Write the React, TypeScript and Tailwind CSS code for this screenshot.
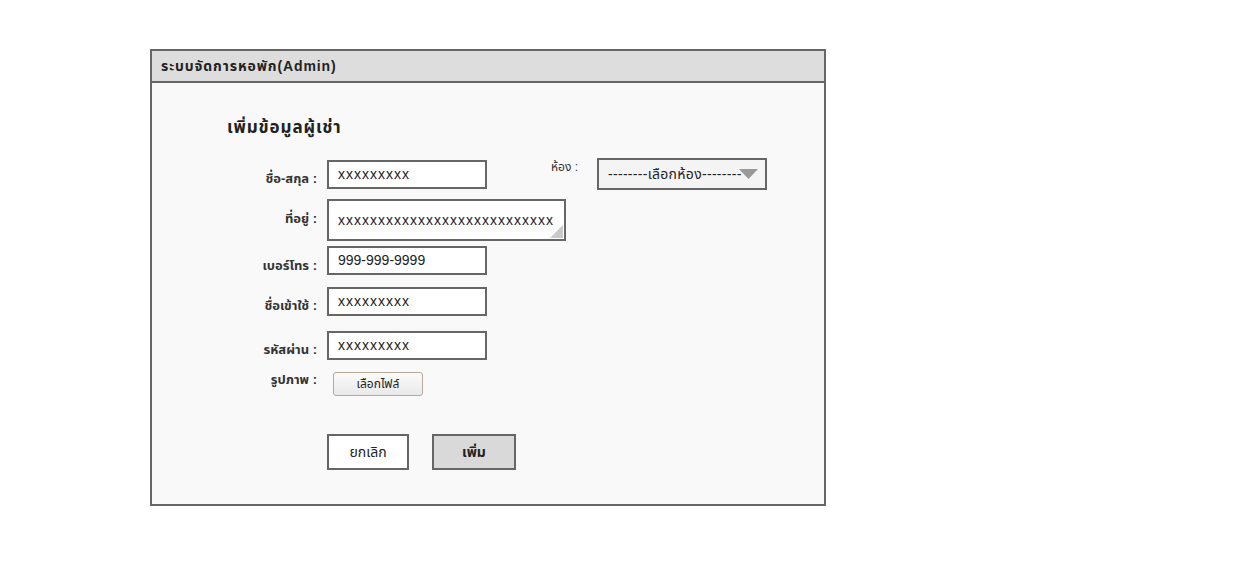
const font = { fontFamily: '"Liberation Sans", "Noto Sans Thai", "Noto Sans", sans-serif' }

function Field({ children, className = '' }: { children: React.ReactNode; className?: string }) {
  return (
    <div
      className={`relative flex items-center border-2 border-[#666] bg-white pl-[9px] text-[14px] text-[#222] ${className}`}
    >
      {children}
    </div>
  )
}

function Label({ text, className = '' }: { text: string; className?: string }) {
  return (
    <div className={`w-[165px] shrink-0 text-right text-[13px] font-bold leading-[16px] text-[#333] ${className}`}>
      {text}
    </div>
  )
}

export default function App() {
  return (
    <div className="min-h-[563px] w-[1251px] bg-white pl-[150px] pt-[49px]" style={font}>
      <div className="h-[457px] w-[676px] border-2 border-[#666] bg-[#f9f9f9]">
        {/* header */}
        <div className="flex h-[32px] items-center border-b-2 border-[#666] bg-[#dddddd] pl-[9px] text-[14px] font-bold tracking-[0.9px] text-[#222]">
          ระบบจัดการหอพัก(Admin)
        </div>

        <div className="pt-[33px]">
          <div className="ml-[75px] text-[17px] font-bold leading-[24px] tracking-[0.9px] text-[#222]">
            เพิ่มข้อมูลผู้เช่า
          </div>

          {/* name + room */}
          <div className="mt-[18px] flex items-start">
            <Label text="ชื่อ-สกุล :" className="mt-[13px]" />
            <Field className="ml-[10px] mt-[2px] h-[29px] w-[160px] tracking-[1px]">xxxxxxxxx</Field>
            <div className="ml-[64px] mt-[1px] w-[46px] text-[12px] leading-[16px] text-[#333]">ห้อง :</div>
            <div className="relative flex h-[32px] w-[170px] items-center overflow-hidden border-2 border-[#666] bg-[#f4f4f4] pl-[9px] text-[14px] text-[#222]">
              <span className="whitespace-nowrap tracking-[0.3px]">--------เลือกห้อง--------</span>
              <svg className="absolute right-[7px] top-[9px]" width="19" height="10" viewBox="0 0 19 10">
                <polygon points="0,0 19,0 9.5,10" fill="#999" />
              </svg>
            </div>
          </div>

          {/* address */}
          <div className="mt-[9px] flex items-center">
            <Label text="ที่อยู่ :" className="mt-[-2px]" />
            <Field className="ml-[10px] h-[42px] w-[239px] overflow-hidden tracking-[1px]">
              <span className="whitespace-nowrap">xxxxxxxxxxxxxxxxxxxxxxxxxxx</span>
              <svg className="absolute bottom-[1px] right-[1px]" width="13" height="13" viewBox="0 0 13 13">
                <polygon points="13,0 13,13 0,13" fill="#c8c8c8" />
              </svg>
            </Field>
          </div>

          {/* phone */}
          <div className="mt-[5px] flex items-start">
            <Label text="เบอร์โทร :" className="mt-[12px]" />
            <Field className="ml-[10px] h-[29px] w-[160px]">999-999-9999</Field>
          </div>

          {/* username */}
          <div className="mt-[12px] flex items-start">
            <Label text="ชื่อเข้าใช้ :" className="mt-[11px]" />
            <Field className="ml-[10px] h-[29px] w-[160px] tracking-[1px]">xxxxxxxxx</Field>
          </div>

          {/* password */}
          <div className="mt-[15px] flex items-start">
            <Label text="รหัสผ่าน :" className="mt-[11px]" />
            <Field className="ml-[10px] h-[29px] w-[160px] tracking-[1px]">xxxxxxxxx</Field>
          </div>

          {/* picture */}
          <div className="mt-[12px] flex items-start">
            <Label text="รูปภาพ :" />
            <button className="ml-[16px] flex h-[24px] w-[90px] items-center justify-center rounded-[3px] border border-[#b8aa98] bg-gradient-to-b from-[#fbfbfb] to-[#e9e9e9] text-[12px] text-[#222]">
              เลือกไฟล์
            </button>
          </div>

          {/* actions */}
          <div className="ml-[175px] mt-[38px] flex">
            <button className="flex h-[36px] w-[82px] items-center justify-center border-2 border-[#666] bg-white text-[14px] text-[#222]">
              ยกเลิก
            </button>
            <button className="ml-[23px] flex h-[36px] w-[84px] items-center justify-center border-2 border-[#666] bg-[#d9d9d9] text-[14px] font-bold text-[#222]">
              เพิ่ม
            </button>
          </div>
        </div>
      </div>
    </div>
  )
}
